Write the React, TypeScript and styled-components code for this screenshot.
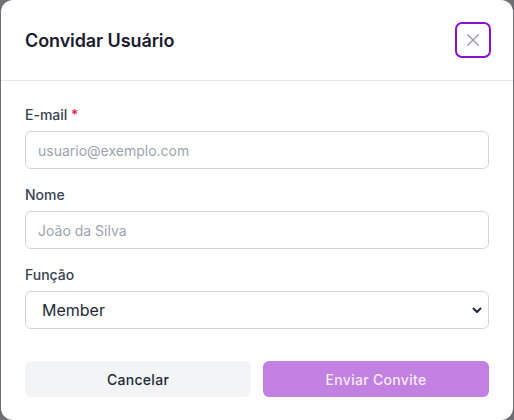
import React from "react";
import styled, { createGlobalStyle } from "styled-components";

const Global = createGlobalStyle`
  html, body { margin: 0; padding: 0; }
  body {
    background: #6f6f73;
    font-family: Inter, "Noto Sans", sans-serif;
    -webkit-font-smoothing: antialiased;
  }
  * { box-sizing: border-box; }
`;

const Modal = styled.div`
  width: 512px;
  height: 420px;
  margin: 0 auto;
  background: #ffffff;
  border-radius: 12px;
  overflow: hidden;
  display: flex;
  flex-direction: column;
`;

const Header = styled.div`
  height: 81px;
  display: flex;
  align-items: center;
  justify-content: space-between;
  padding: 0 22px 0 24px;
  border-bottom: 1px solid #e5e7eb;
`;

const Title = styled.h2`
  margin: 0;
  font-size: 18px;
  font-weight: 600;
  color: #1b1a2e;
  letter-spacing: -0.1px;
`;

const CloseButton = styled.button`
  width: 36px;
  height: 36px;
  display: flex;
  align-items: center;
  justify-content: center;
  background: #fff;
  border: 2px solid #8a12cc;
  border-radius: 7px;
  padding: 0;
  color: #9ca3af;
  cursor: pointer;
`;

const Body = styled.form`
  padding: 24px 24px 0 24px;
  display: flex;
  flex-direction: column;
`;

const Field = styled.div`
  display: flex;
  flex-direction: column;
  gap: 6px;
  margin-bottom: 16px;
`;

const Label = styled.label`
  font-size: 14px;
  line-height: 20px;
  font-weight: 500;
  color: #374151;
`;

const Required = styled.span`
  color: #e11d48;
`;

const Input = styled.input`
  height: 38px;
  width: 100%;
  border: 1px solid #d1d5db;
  border-radius: 6px;
  padding: 0 12px;
  font-family: Inter, "Noto Sans", sans-serif;
  font-size: 14px;
  color: #1f2937;
  outline: none;
  &::placeholder { color: #9ca3af; }
`;

const Select = styled.select`
  height: 38px;
  width: 100%;
  border: 1px solid #d1d5db;
  border-radius: 6px;
  padding: 0 10px 0 16px;
  font-family: Inter, "Noto Sans", sans-serif;
  font-size: 16px;
  color: #1f2937;
  background: #fff;
  outline: none;
  appearance: none;
  -webkit-appearance: none;
  background-image: url("data:image/svg+xml;utf8,<svg xmlns='http://www.w3.org/2000/svg' width='12' height='12' viewBox='0 0 12 12'><path d='M2.5 4.5 L6 8 L9.5 4.5' fill='none' stroke='%231f2937' stroke-width='2' stroke-linecap='round' stroke-linejoin='round'/></svg>");
  background-repeat: no-repeat;
  background-position: right 5px center;
`;

const Actions = styled.div`
  display: grid;
  grid-template-columns: 1fr 1fr;
  gap: 12px;
  margin-top: 16px;
`;

const Button = styled.button<{ $primary?: boolean }>`
  height: 36px;
  border: none;
  border-radius: 6px;
  font-family: Inter, "Noto Sans", sans-serif;
  font-size: 14px;
  font-weight: 500;
  letter-spacing: 0.3px;
  background: ${(p) => (p.$primary ? "#c280e0" : "#f3f4f6")};
  color: ${(p) => (p.$primary ? "#f6ecfb" : "#1f2937")};
  cursor: pointer;
`;

export default function App() {
  return (
    <>
      <Global />
      <Modal>
        <Header>
          <Title>Convidar Usuário</Title>
          <CloseButton type="button" aria-label="Fechar">
            <svg width="18" height="18" viewBox="0 0 24 24" fill="none" stroke="currentColor" strokeWidth="2" strokeLinecap="round">
              <path d="M5 5 L19 19 M19 5 L5 19" />
            </svg>
          </CloseButton>
        </Header>
        <Body onSubmit={(e) => e.preventDefault()}>
          <Field>
            <Label>
              E-mail <Required>*</Required>
            </Label>
            <Input type="email" placeholder="usuario@exemplo.com" />
          </Field>
          <Field>
            <Label>Nome</Label>
            <Input type="text" placeholder="João da Silva" />
          </Field>
          <Field>
            <Label>Função</Label>
            <Select defaultValue="member">
              <option value="member">Member</option>
              <option value="admin">Admin</option>
            </Select>
          </Field>
          <Actions>
            <Button type="button">Cancelar</Button>
            <Button type="submit" $primary disabled>
              Enviar Convite
            </Button>
          </Actions>
        </Body>
      </Modal>
    </>
  );
}
